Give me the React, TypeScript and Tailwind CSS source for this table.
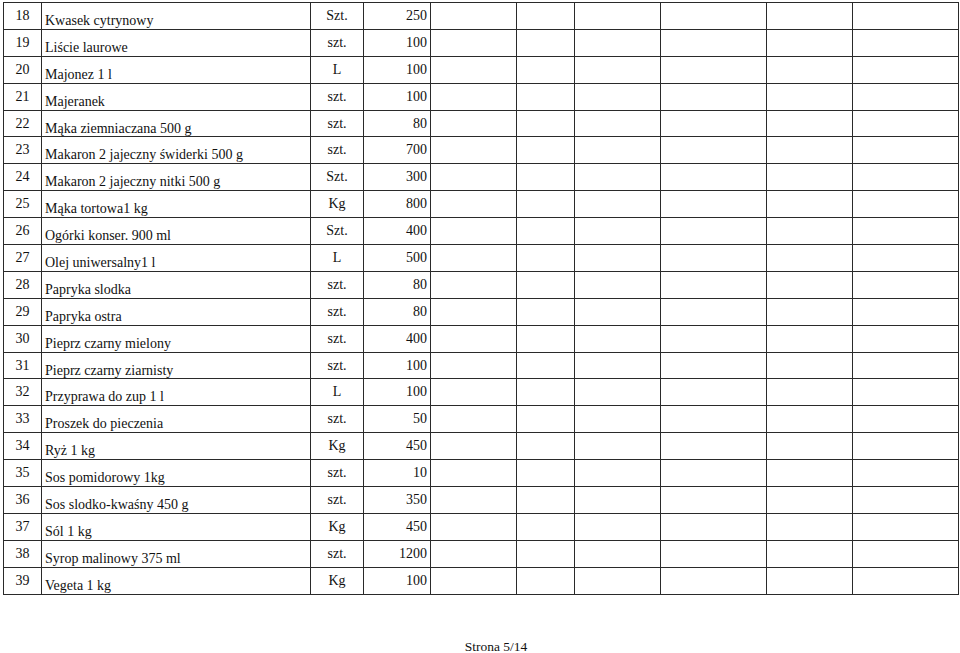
const rows = [
  { no: 18, name: 'Kwasek cytrynowy', unit: 'Szt.', qty: 250 },
  { no: 19, name: 'Liście laurowe', unit: 'szt.', qty: 100 },
  { no: 20, name: 'Majonez 1 l', unit: 'L', qty: 100 },
  { no: 21, name: 'Majeranek', unit: 'szt.', qty: 100 },
  { no: 22, name: 'Mąka ziemniaczana 500 g', unit: 'szt.', qty: 80, short: true },
  { no: 23, name: 'Makaron 2 jajeczny świderki 500 g', unit: 'szt.', qty: 700 },
  { no: 24, name: 'Makaron 2 jajeczny nitki 500 g', unit: 'Szt.', qty: 300 },
  { no: 25, name: 'Mąka tortowa1 kg', unit: 'Kg', qty: 800 },
  { no: 26, name: 'Ogórki konser. 900 ml', unit: 'Szt.', qty: 400 },
  { no: 27, name: 'Olej uniwersalny1 l', unit: 'L', qty: 500 },
  { no: 28, name: 'Papryka slodka', unit: 'szt.', qty: 80 },
  { no: 29, name: 'Papryka ostra', unit: 'szt.', qty: 80 },
  { no: 30, name: 'Pieprz czarny mielony', unit: 'szt.', qty: 400 },
  { no: 31, name: 'Pieprz czarny ziarnisty', unit: 'szt.', qty: 100, short: true },
  { no: 32, name: 'Przyprawa do zup 1 l', unit: 'L', qty: 100 },
  { no: 33, name: 'Proszek do pieczenia', unit: 'szt.', qty: 50 },
  { no: 34, name: 'Ryż 1 kg', unit: 'Kg', qty: 450 },
  { no: 35, name: 'Sos pomidorowy 1kg', unit: 'szt.', qty: 10 },
  { no: 36, name: 'Sos slodko-kwaśny 450 g', unit: 'szt.', qty: 350 },
  { no: 37, name: 'Sól 1 kg', unit: 'Kg', qty: 450 },
  { no: 38, name: 'Syrop malinowy 375 ml', unit: 'szt.', qty: 1200 },
  { no: 39, name: 'Vegeta 1 kg', unit: 'Kg', qty: 100 },
];

// empty price / value columns to the right of the quantity
const blanks = [0, 1, 2, 3, 4, 5];

export default function App() {
  return (
    <div className="w-[960px] h-[653px] bg-white text-[#111] font-['Liberation_Serif',serif] text-[14px] leading-[16px] overflow-hidden">
      {/* Table */}
      <div className="ml-[3px] mt-[2px] w-[956px] border-l border-t border-[#2a2a2a]">
        {rows.map((r) => (
          <div
            key={r.no}
            className={`grid grid-cols-[38px_269px_53px_67px_86px_58px_86px_106px_86px_106px] border-b border-[#2a2a2a] ${r.short ? 'h-[26px]' : 'h-[27px]'}`}
          >
            <div className="border-r border-[#2a2a2a] text-center pt-[5px]">{r.no}</div>
            <div className="border-r border-[#2a2a2a] pl-[3px] pt-[10px] whitespace-nowrap">{r.name}</div>
            <div className="border-r border-[#2a2a2a] text-center pt-[5px]">{r.unit}</div>
            <div className="border-r border-[#2a2a2a] text-right pr-[3px] pt-[5px]">{r.qty}</div>
            {blanks.map((b) => (
              <div key={b} className="border-r border-[#2a2a2a]" />
            ))}
          </div>
        ))}
      </div>

      {/* Footer */}
      <div className="mt-[45px] pl-[32px] text-center text-[13.5px] leading-[13px]">Strona 5/14</div>
    </div>
  );
}
